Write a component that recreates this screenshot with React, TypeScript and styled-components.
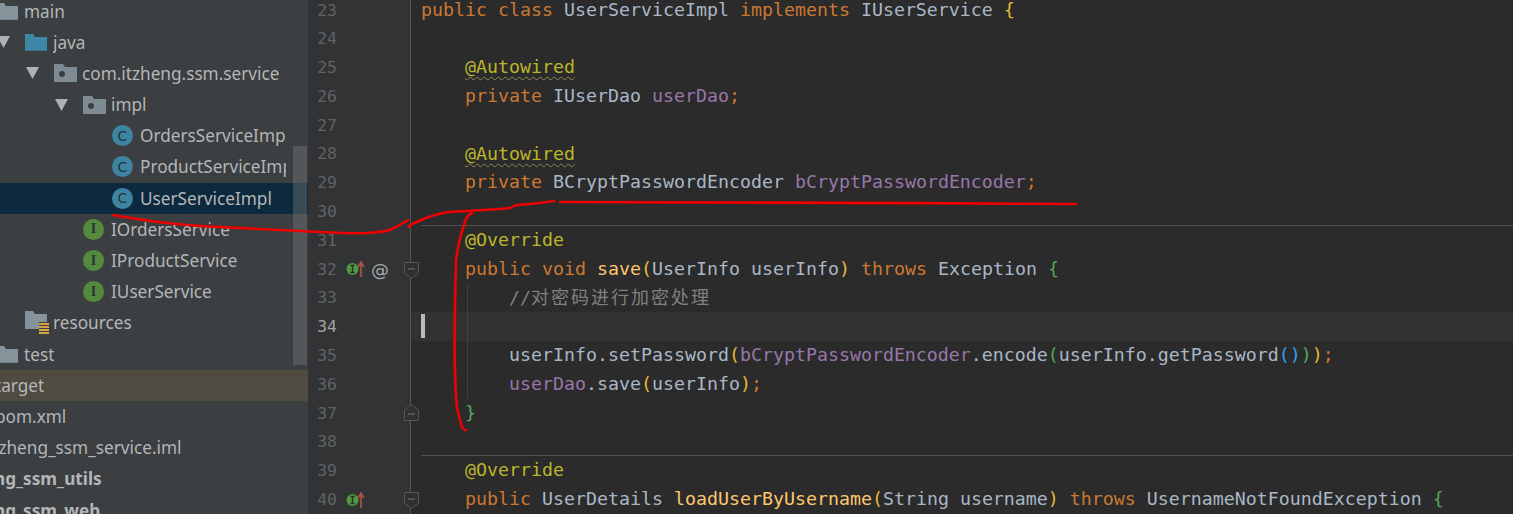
import React from 'react';
import styled, { createGlobalStyle } from 'styled-components';

const GlobalStyle = createGlobalStyle`
  html, body {
    margin: 0;
    padding: 0;
    background: #2b2b2b;
  }
`;

type IconKind = 'source' | 'java' | 'package' | 'class' | 'interface' | 'resources' | 'none';

interface ITreeItem {
  name: string;
  depth: number;
  icon: IconKind;
  open?: boolean;
  selected?: boolean;
  excluded?: boolean;
  bold?: boolean;
}

const treeItems: ITreeItem[] = [
  { name: 'main', depth: 0, icon: 'source', open: true },
  { name: 'java', depth: 1, icon: 'java', open: true },
  { name: 'com.itzheng.ssm.service', depth: 2, icon: 'package', open: true },
  { name: 'impl', depth: 3, icon: 'package', open: true },
  { name: 'OrdersServiceImpl', depth: 4, icon: 'class' },
  { name: 'ProductServiceImpl', depth: 4, icon: 'class' },
  { name: 'UserServiceImpl', depth: 4, icon: 'class', selected: true },
  { name: 'IOrdersService', depth: 3, icon: 'interface' },
  { name: 'IProductService', depth: 3, icon: 'interface' },
  { name: 'IUserService', depth: 3, icon: 'interface' },
  { name: 'resources', depth: 1, icon: 'resources' },
  { name: 'test', depth: 0, icon: 'source' },
  { name: 'target', depth: -1, icon: 'none', excluded: true },
  { name: 'pom.xml', depth: -1, icon: 'none' },
  { name: 'itzheng_ssm_service.iml', depth: -1.25, icon: 'none' },
  { name: 'itzheng_ssm_utils', depth: -2.5, icon: 'none', bold: true },
  { name: 'itzheng_ssm_web', depth: -2.5, icon: 'none', bold: true },
];

type TokenKind = 'kw' | 'type' | 'field' | 'anno' | 'comment' | 'cjk' | 'method' | 'plain' | 'yellow' | 'green' | 'blue' | 'semi';
type Token = [TokenKind, string];

interface ICodeLine {
  no: number;
  tokens?: Token[];
  mark?: 'impl' | 'implAt';
  fold?: 'start' | 'end';
  separator?: boolean;
  current?: boolean;
  guide?: boolean;
  squiggle?: boolean;
}

const codeLines: ICodeLine[] = [
  {
    no: 23,
    tokens: [
      ['kw', 'public class '],
      ['type', 'UserServiceImpl '],
      ['kw', 'implements '],
      ['type', 'IUserService '],
      ['yellow', '{'],
    ],
  },
  { no: 24 },
  { no: 25, tokens: [['plain', '    '], ['anno', '@Autowired']], squiggle: true },
  {
    no: 26,
    tokens: [
      ['plain', '    '],
      ['kw', 'private '],
      ['type', 'IUserDao '],
      ['field', 'userDao'],
      ['semi', ';'],
    ],
  },
  { no: 27 },
  { no: 28, tokens: [['plain', '    '], ['anno', '@Autowired']], squiggle: true },
  {
    no: 29,
    tokens: [
      ['plain', '    '],
      ['kw', 'private '],
      ['type', 'BCryptPasswordEncoder '],
      ['field', 'bCryptPasswordEncoder'],
      ['semi', ';'],
    ],
  },
  { no: 30 },
  { no: 31, tokens: [['plain', '    '], ['anno', '@Override']], separator: true },
  {
    no: 32,
    mark: 'implAt',
    fold: 'start',
    tokens: [
      ['plain', '    '],
      ['kw', 'public void '],
      ['method', 'save'],
      ['yellow', '('],
      ['type', 'UserInfo userInfo'],
      ['yellow', ') '],
      ['kw', 'throws '],
      ['type', 'Exception '],
      ['green', '{'],
    ],
  },
  {
    no: 33,
    guide: true,
    tokens: [['plain', '        '], ['comment', '//'], ['cjk', '对密码进行加密处理']],
  },
  { no: 34, current: true, guide: true },
  {
    no: 35,
    guide: true,
    tokens: [
      ['plain', '        '],
      ['type', 'userInfo.setPassword'],
      ['yellow', '('],
      ['field', 'bCryptPasswordEncoder'],
      ['type', '.encode'],
      ['green', '('],
      ['type', 'userInfo.getPassword'],
      ['blue', '()'],
      ['green', ')'],
      ['yellow', ')'],
      ['semi', ';'],
    ],
  },
  {
    no: 36,
    guide: true,
    tokens: [
      ['plain', '        '],
      ['field', 'userDao'],
      ['type', '.save'],
      ['yellow', '('],
      ['type', 'userInfo'],
      ['yellow', ')'],
      ['semi', ';'],
    ],
  },
  { no: 37, fold: 'end', tokens: [['plain', '    '], ['green', '}']] },
  { no: 38 },
  { no: 39, tokens: [['plain', '    '], ['anno', '@Override']], separator: true },
  {
    no: 40,
    mark: 'impl',
    fold: 'start',
    tokens: [
      ['plain', '    '],
      ['kw', 'public '],
      ['type', 'UserDetails '],
      ['method', 'loadUserByUsername'],
      ['yellow', '('],
      ['type', 'String username'],
      ['yellow', ') '],
      ['kw', 'throws '],
      ['type', 'UsernameNotFoundException '],
      ['green', '{'],
    ],
  },
];

const tokenColors: Record<TokenKind, string> = {
  kw: '#cc7832',
  type: '#a9b7c6',
  field: '#9876aa',
  anno: '#bbb529',
  comment: '#808080',
  cjk: '#808080',
  method: '#ffc66d',
  plain: '#a9b7c6',
  yellow: '#e8ba36',
  green: '#54a857',
  blue: '#359ff4',
  semi: '#cc7832',
};

const FolderIcon = ({ color }: { color: string }) => (
  <svg width="22" height="17" viewBox="0 0 22 17">
    <path d="M0 0h8l2 3h12v14H0z" fill={color} />
    <path d="M0 16h22v1H0z" fill="#000" opacity="0.12" />
  </svg>
);

const PackageIcon = () => (
  <svg width="23" height="18" viewBox="0 0 23 18">
    <path d="M0 0h9l2 3h12v15H0z" fill="#7f8b93" />
    <circle cx="8" cy="10" r="3" fill="#3c3f41" />
  </svg>
);

const ResourcesIcon = () => (
  <svg width="24" height="23" viewBox="0 0 24 23">
    <path d="M0 0h8l2 3h12v8h-8v7H0z" fill="#87939a" />
    <path d="M14 12h10v2H14zM14 15h10v2H14zM14 18h10v2H14zM14 21h10v2H14z" fill="#d9a343" />
  </svg>
);

const ChevronIcon = () => (
  <svg width="13" height="12" viewBox="0 0 13 12">
    <path d="M0 0h13L6.5 12z" fill="#afb1b3" />
  </svg>
);

const TreeIcon: React.FC<{ kind: IconKind }> = ({ kind }) => {
  switch (kind) {
    case 'java':
      return <FolderIcon color="#3f87a6" />;
    case 'source':
      return <FolderIcon color="#87939a" />;
    case 'package':
      return <PackageIcon />;
    case 'resources':
      return <ResourcesIcon />;
    case 'class':
      return <Badge $color="#3d84a3">C</Badge>;
    case 'interface':
      return <Badge $color="#548a3c" $serif>I</Badge>;
    default:
      return null;
  }
};

const ImplMark = () => (
  <svg width="24" height="18" viewBox="0 0 24 18">
    <circle cx="6.5" cy="9" r="6" fill="#4f9a3e" />
    <path d="M4.5 5.5h4M4.5 12.5h4M6.5 5.5v7" stroke="#2b2b2b" strokeWidth="1.4" fill="none" />
    <path d="M15 17V3M12 7l3-5 3 5" stroke="#b5504c" strokeWidth="1.6" fill="none" />
  </svg>
);

const FoldMark: React.FC<{ end?: boolean }> = ({ end }) => (
  <svg width="15" height="17" viewBox="0 0 15 17">
    <path
      d={end ? 'M.5 16.5h14V6L7.5.5.5 6z' : 'M.5.5h14V11l-7 5.5-7-5.5z'}
      fill="#2f3032"
      stroke="#555"
    />
    <path d={end ? 'M4 10h7' : 'M4 7h7'} stroke="#777" />
  </svg>
);

export default function App() {
  return (
    <>
      <GlobalStyle />
      <Window>
        <ProjectPanel>
          <TreeList>
            {treeItems.map((item) => (
              <TreeRow key={item.name} $selected={item.selected} $excluded={item.excluded}>
                <RowContent $depth={item.depth}>
                  <ChevronSlot>{item.open && <ChevronIcon />}</ChevronSlot>
                  <IconSlot>
                    <TreeIcon kind={item.icon} />
                  </IconSlot>
                  <NodeName $bold={item.bold}>{item.name}</NodeName>
                </RowContent>
              </TreeRow>
            ))}
          </TreeList>
          <TreeScrollThumb />
        </ProjectPanel>
        <Editor>
          {codeLines.map((line) => (
            <CodeRow key={line.no}>
              <Gutter>
                <LineNo $current={line.current}>{line.no}</LineNo>
                <Marks>
                  {line.mark && <ImplMark />}
                  {line.mark === 'implAt' && <AtMark>@</AtMark>}
                </Marks>
                {line.fold && (
                  <FoldSlot $end={line.fold === 'end'}>
                    <FoldMark end={line.fold === 'end'} />
                  </FoldSlot>
                )}
              </Gutter>
              <CodeCell $current={line.current} $guide={line.guide}>
                {line.separator && <Separator />}
                {line.current && <Caret />}
                {line.tokens?.map(([kind, text], i) => (
                  <Tok key={i} $kind={kind} $squiggle={line.squiggle && kind === 'anno'}>
                    {text}
                  </Tok>
                ))}
              </CodeCell>
            </CodeRow>
          ))}
        </Editor>
        <Annotation viewBox="0 0 1513 514">
          <path d="M113 215C140 220 170 224 200 226C240 228 275 230 300 231C325 232 350 234 367 233C378 232 386 232 392 229C398 226 403 223 408 220" />
          <path d="M409 227L410 225C414 223 417 222 421 220C430 216 438 214 448 212C468 211 490 210 510 208C513 206 515 205 518 205C530 204 542 203 554 201" />
          <path d="M560 202C700 202 900 203 1076 204" />
          <path d="M472 213C468 215 466 218 465 222C460 236 457 250 456 262C455 300 454 340 455 370C455 385 456 396 457 407C458 414 460 419 461 424C462 428 464 430 466 430" />
        </Annotation>
      </Window>
    </>
  );
}

// Styled Components
const Window = styled.div`
  position: relative;
  display: flex;
  width: 1513px;
  height: 514px;
  overflow: hidden;
  background: #2b2b2b;
`;

const ProjectPanel = styled.div`
  position: relative;
  flex: 0 0 308px;
  height: 514px;
  overflow: hidden;
  background: #3c3f41;
`;

const TreeList = styled.div`
  margin-top: -4.6px;
`;

const TreeRow = styled.div<{ $selected?: boolean; $excluded?: boolean }>`
  height: 31.2px;
  padding-right: 22px;
  overflow: hidden;
  background: ${(p) => (p.$selected ? '#0d293e' : p.$excluded ? '#4f4b41' : 'transparent')};
`;

const RowContent = styled.div<{ $depth: number }>`
  display: flex;
  align-items: center;
  height: 100%;
  margin-left: ${(p) => p.$depth * 29 - 33}px;
`;

const ChevronSlot = styled.div`
  display: flex;
  align-items: center;
  flex: 0 0 29px;
  padding-left: 1px;
  box-sizing: border-box;
`;

const IconSlot = styled.div`
  display: flex;
  align-items: center;
  flex: 0 0 28px;
`;

const Badge = styled.div<{ $color: string; $serif?: boolean }>`
  display: flex;
  align-items: center;
  justify-content: center;
  width: 21px;
  height: 21px;
  border-radius: 50%;
  background: ${(p) => p.$color};
  color: #26343c;
  font-family: ${(p) => (p.$serif ? '"Liberation Serif", serif' : '"DejaVu Sans", sans-serif')};
  font-size: 14px;
  font-weight: ${(p) => (p.$serif ? 700 : 400)};
`;

const NodeName = styled.div<{ $bold?: boolean }>`
  min-width: 0;
  overflow: hidden;
  white-space: nowrap;
  color: #b4b6b8;
  font-family: "Noto Sans", "Open Sans", sans-serif;
  font-size: 17.2px;
  font-weight: ${(p) => (p.$bold ? 700 : 400)};
`;

const TreeScrollThumb = styled.div`
  position: absolute;
  top: 146px;
  left: 293px;
  width: 14px;
  height: 219px;
  background: rgba(120, 120, 120, 0.42);
`;

const Editor = styled.div`
  flex: 1;
  min-width: 0;
  margin-top: -4.4px;
`;

const CodeRow = styled.div`
  display: flex;
  height: 28.8px;
`;

const Gutter = styled.div`
  position: relative;
  display: flex;
  align-items: center;
  flex: 0 0 103px;
  box-sizing: border-box;
  border-right: 1px solid #555555;
  background: #313335;
`;

const LineNo = styled.div<{ $current?: boolean }>`
  flex: 0 0 29px;
  text-align: right;
  color: ${(p) => (p.$current ? '#a4a3a3' : '#606366')};
  font-family: "DejaVu Sans Mono", monospace;
  font-size: 16.4px;
`;

const Marks = styled.div`
  display: flex;
  align-items: center;
  margin-left: 9px;
`;

const AtMark = styled.span`
  margin-left: 1px;
  color: #a8a8a8;
  font-family: "DejaVu Sans", sans-serif;
  font-size: 18px;
`;

const FoldSlot = styled.div<{ $end?: boolean }>`
  position: absolute;
  right: -9px;
  top: ${(p) => (p.$end ? 5 : 7)}px;
  display: flex;
`;

const CodeCell = styled.div<{ $current?: boolean; $guide?: boolean }>`
  position: relative;
  flex: 1;
  min-width: 0;
  padding-left: 10px;
  white-space: pre;
  line-height: 28.8px;
  font-family: "DejaVu Sans Mono", monospace;
  font-size: 18.27px;
  background-color: ${(p) => (p.$current ? '#323232' : 'transparent')};
  ${(p) =>
    p.$guide
      ? 'background-image: linear-gradient(#394539, #394539); background-size: 1px 100%; background-position: 56px 0; background-repeat: no-repeat;'
      : ''}
`;

const Separator = styled.div`
  position: absolute;
  top: -1px;
  left: 10px;
  right: 0;
  height: 1px;
  background: #515151;
`;

const Caret = styled.div`
  position: absolute;
  top: 2px;
  left: 10px;
  width: 4px;
  height: 24px;
  background: #bbbbbb;
`;

const Tok = styled.span<{ $kind: TokenKind; $squiggle?: boolean }>`
  color: ${(p) => tokenColors[p.$kind]};
  ${(p) =>
    p.$kind === 'cjk'
      ? 'font-family: "Noto Sans CJK SC", sans-serif; font-size: 18px; letter-spacing: 2px; line-height: 0;'
      : ''}
  ${(p) =>
    p.$squiggle
      ? 'text-decoration: underline wavy #8a8a5a; text-decoration-thickness: 1px; text-underline-offset: 3px;'
      : ''}
`;

const Annotation = styled.svg`
  position: absolute;
  top: 0;
  left: 0;
  width: 1513px;
  height: 514px;
  pointer-events: none;
  fill: none;
  stroke: #f00000;
  stroke-width: 2.6px;
  stroke-linecap: round;
`;
